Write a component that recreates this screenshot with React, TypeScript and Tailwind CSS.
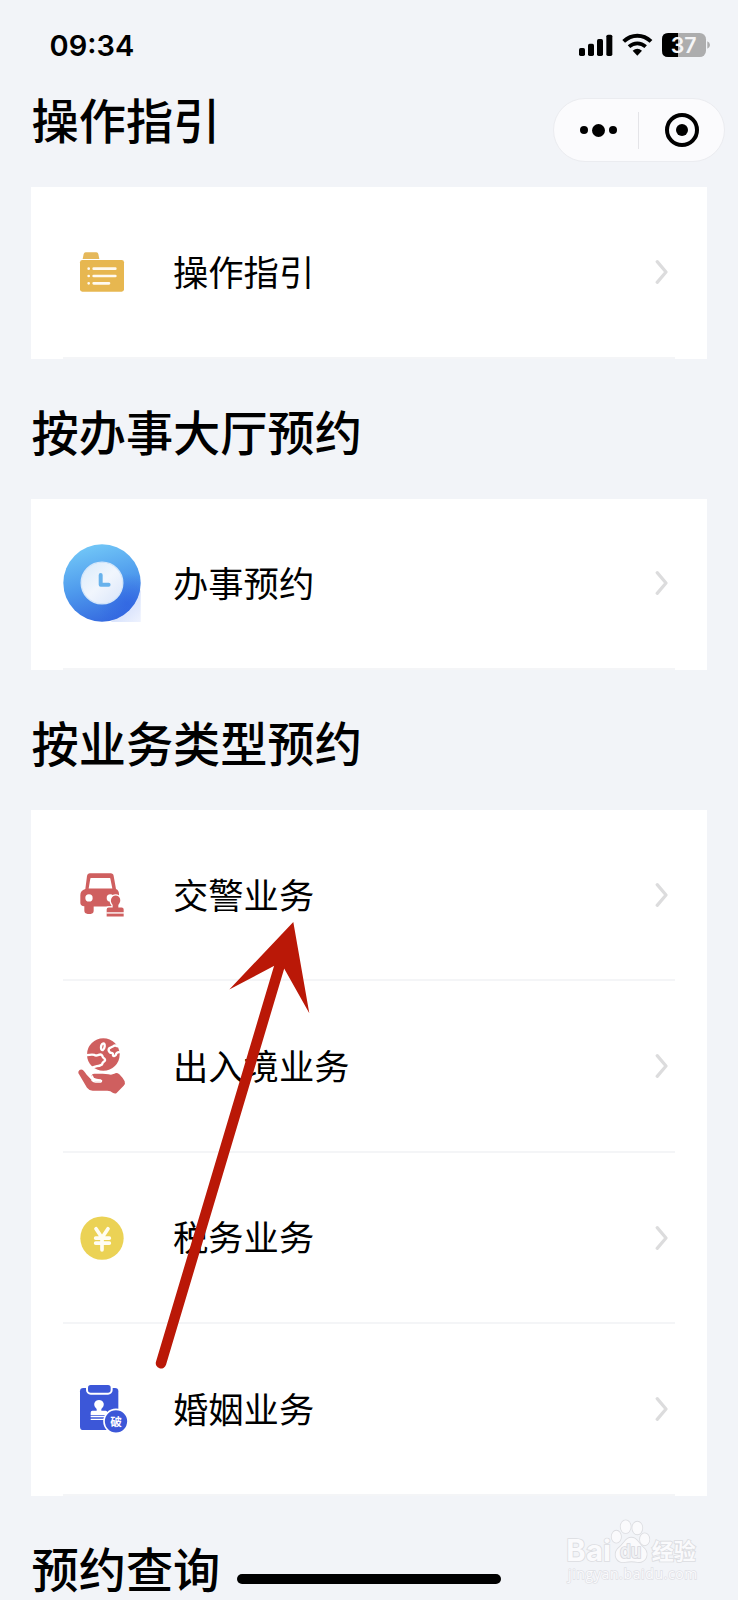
import React from 'react';

interface Item {
  label: string;
  icon: React.FC;
}

interface Section {
  title: string;
  items: Item[];
}

const FolderIcon: React.FC = () => (
  <svg className="w-[78px] h-[78px]" viewBox="129 158 234 234" fill="none">
    <path d="M188 236l3-15q1-5 6-5h32q5 0 6 5l3 15z" fill="#e5b85a" />
    <rect x="180" y="239" width="132" height="95" rx="7" fill="#e7b750" />
    <g stroke="#fffaf0" strokeWidth="8" strokeLinecap="round">
      <path d="M206 265h.1M206 287h.1M206 309h.1" />
      <path d="M221 265h65M221 287h65M221 309h46" />
    </g>
  </svg>
);

const ClockIcon: React.FC = () => (
  <svg className="w-[78px] h-[78px]" viewBox="129 461 234 236" fill="none">
    <defs>
      <linearGradient id="ring" x1="215" y1="461" x2="280" y2="697" gradientUnits="userSpaceOnUse">
        <stop offset="0" stopColor="#72c7f7" />
        <stop offset="0.5" stopColor="#4f9bed" />
        <stop offset="1" stopColor="#3468df" />
      </linearGradient>
      <linearGradient id="shade" x1="300" y1="630" x2="363" y2="697" gradientUnits="userSpaceOnUse">
        <stop offset="0" stopColor="#cddbfb" />
        <stop offset="1" stopColor="#eef2fe" />
      </linearGradient>
      <radialGradient id="deep" cx="322" cy="640" r="90" gradientUnits="userSpaceOnUse">
        <stop offset="0" stopColor="#2f62e2" stopOpacity="0.7" />
        <stop offset="1" stopColor="#2f62e2" stopOpacity="0" />
      </radialGradient>
      <linearGradient id="face" x1="190" y1="520" x2="300" y2="640" gradientUnits="userSpaceOnUse">
        <stop offset="0" stopColor="#d9ebfb" />
        <stop offset="0.5" stopColor="#f1f6fd" />
        <stop offset="1" stopColor="#dbe6fa" />
      </linearGradient>
    </defs>
    <path d="M363 600v97h-90z" fill="url(#shade)" />
    <circle cx="246" cy="579" r="117" fill="url(#ring)" />
    <circle cx="246" cy="579" r="117" fill="url(#deep)" />
    <circle cx="246" cy="579" r="63" fill="url(#face)" stroke="#d3e6fa" strokeWidth="4" />
    <path d="M242 555v29h24" stroke="#68b2ec" strokeWidth="12" strokeLinecap="round" strokeLinejoin="round" />
  </svg>
);

const CarIcon: React.FC = () => (
  <svg className="w-[78px] h-[78px]" viewBox="9 -13.8 234 234" fill="none">
    <path
      fillRule="evenodd"
      d="M89 38h63q8 0 9 8l7 39q9 4 9 16v37h-76v12q0 10-9 10H83q-10 0-10-10v-13q-12-1-12-10v-24q0-13 15-18l5-39q1-8 8-8zM93 52q-2 0-2 2l-5 30h71l-6-30q0-2-2-2z"
      fill="#cf5f5f"
    />
    <circle cx="87" cy="112" r="11" fill="#fff" />
    <circle cx="151" cy="112" r="11" fill="#fff" />
    <path
      d="M158 133q-8-9-4-19 4-9 13-9t13 9q3 10-5 19v8h10q6 0 6 6v21h-51v-21q0-6 6-6h12z"
      fill="#cf5f5f"
      stroke="#fff"
      strokeWidth="8"
      paintOrder="stroke"
    />
    <path d="M139 157h53" stroke="#fff" strokeWidth="4" />
  </svg>
);

const GlobeHandIcon: React.FC = () => (
  <svg className="w-[78px] h-[78px]" viewBox="9 5.4 234 234" fill="none">
    <circle cx="130" cy="88" r="49" fill="#cf5f5f" />
    <g stroke="#fff" strokeWidth="7" strokeLinecap="round" strokeLinejoin="round">
      <path d="M80 90q16-3 23-1 4 4 13 0 8-3 11 3 1 6 6 8 5 5-1 9-5 3-6 9-8 5-15 5-9 2-14 4" />
      <path d="M123 67q0-9 6-12 6-1 5 9-1 8-6 11-5 0-5-8z" />
      <path d="M172 63q-7-4-12 0l-8 4q-7 2-6 9 3 8 9 7 5 1 4 8 3 4 8-1 2-9 10-9" />
    </g>
    <path
      d="M55 140q4-9 12-6 4 2 13 15l17 18q4 3 12 3h13q5 0 5-3t-5-4l-15-3q-9-2-12-7-1-6 8-7h25q9 0 17 1 9 3 18-1 6-5 15 1 12 12 16 21 3 9-3 14l-22 22q-4 2-11-1-6-6-16-6H98q-10 0-17-9l-23-39q-4-5-3-9z"
      fill="#cf5f5f"
    />
    <path d="M97 152q1 9 11 12l14 1q5 3 0 6h-15q-6-1-11-5" stroke="#fff" strokeWidth="4" strokeLinecap="round" />
  </svg>
);

const YenIcon: React.FC = () => (
  <svg className="w-[78px] h-[78px]" viewBox="9 -5.4 234 234" fill="none">
    <circle cx="126" cy="112" r="65" fill="#ebd255" />
    <path d="M108 84l18 27 18-27M126 111v36M107 112h41M107 127h41" stroke="#fffdf2" strokeWidth="11" strokeLinecap="round" />
  </svg>
);

const MarriageIcon: React.FC = () => (
  <svg className="w-[78px] h-[78px]" viewBox="9 509 234 234" fill="none">
    <rect x="60" y="563" width="115" height="126" rx="10" fill="#3c57d8" />
    <rect x="84" y="554" width="68" height="23" rx="8" fill="#3c57d8" stroke="#fff" strokeWidth="12" paintOrder="stroke" />
    <path d="M110 626q-9-8-7-17 4-10 14-10t14 10q2 9-7 17v5h13q5 0 5 6v7H92v-7q0-6 5-6h13z" fill="#fff" />
    <path d="M92 648.5h50M92 657h50" stroke="#fff" strokeWidth="4" />
    <circle cx="168" cy="663" r="36" fill="#3c57d8" stroke="#fff" strokeWidth="5" />
    <text x="168" y="676" textAnchor="middle" fontSize="35" fontWeight="700" fill="#fff">破</text>
  </svg>
);

const ChevronIcon: React.FC = () => (
  <svg className="w-3.5 h-[26px]" viewBox="0 0 14 26" fill="none">
    <path d="M2.2 2.6L11 13 2.2 23.4" stroke="#dcdcdd" strokeWidth="3.2" strokeLinecap="round" strokeLinejoin="round" />
  </svg>
);

const sections: Section[] = [
  { title: '操作指引', items: [{ label: '操作指引', icon: FolderIcon }] },
  { title: '按办事大厅预约', items: [{ label: '办事预约', icon: ClockIcon }] },
  {
    title: '按业务类型预约',
    items: [
      { label: '交警业务', icon: CarIcon },
      { label: '出入境业务', icon: GlobeHandIcon },
      { label: '税务业务', icon: YenIcon },
      { label: '婚姻业务', icon: MarriageIcon },
    ],
  },
];

const StatusBar: React.FC = () => (
  <div className="flex h-[47.3px] justify-between pl-[49.5px] pr-[27px] pt-[27px]">
    <span className="pt-px font-[Inter] text-[29px] leading-9 font-semibold">09:34</span>
    <div className="flex items-start pt-1.5">
      <svg className="w-[34px] h-6" viewBox="237 99 102 72">
        <rect x="237" y="144" width="18" height="24" rx="5" />
        <rect x="264" y="131" width="18" height="37" rx="5" />
        <rect x="291" y="117" width="18" height="51" rx="5" />
        <rect x="319" y="104" width="18" height="64" rx="5" />
      </svg>
      <svg className="ml-[9px] w-[31px] h-6" viewBox="366 99 93 72" fill="none">
        <path d="M371 124q18-17 41-17t41 17" stroke="#000" strokeWidth="12" />
        <path d="M387 140q11-10 25-10t25 10" stroke="#000" strokeWidth="11" />
        <path d="M398 152q14-11 28 0l-14 15z" fill="#000" />
      </svg>
      <svg className="ml-[9px] w-[49px] h-6" viewBox="486 99 147 72">
        <rect x="486" y="99" width="132" height="72" rx="19" fill="#adadae" />
        <path d="M534 99h-29q-19 0-19 19v34q0 19 19 19h29z" fill="#000" />
        <path d="M622 124q8 3 8 11t-8 11z" fill="#adadae" />
        <text x="551" y="158" textAnchor="middle" fontSize="64" fontWeight="600" fill="#f5f5f7" className="font-[Inter]">37</text>
      </svg>
    </div>
  </div>
);

// Mini program menu floating over the page
const MenuCapsule: React.FC = () => (
  <div className="absolute top-[98px] left-[553px] flex h-16 w-[172px] items-center rounded-full border border-[#ebecf0] bg-[#fbfbfd]">
    <div className="flex w-[84px] items-center justify-center gap-1 pl-1">
      <span className="h-2 w-2 rounded-full bg-black" />
      <span className="h-[13px] w-[13px] rounded-full bg-black" />
      <span className="h-2 w-2 rounded-full bg-black" />
    </div>
    <div className="h-[37px] w-px bg-[#e4e4e8]" />
    <div className="flex flex-1 items-center justify-center">
      <span className="flex h-[34px] w-[34px] items-center justify-center rounded-full border-4 border-black">
        <span className="h-3 w-3 rounded-full bg-black" />
      </span>
    </div>
  </div>
);

const Heading: React.FC<{ title: string }> = ({ title }) => (
  <h2 className="flex h-[140px] items-center pt-[3px] pl-[0.5px] text-[47.2px] leading-none font-medium">{title}</h2>
);

const Row: React.FC<{ item: Item }> = ({ item }) => (
  <div className="mx-8 flex h-[171.4px] items-center border-b-2 border-[#f4f5f7]">
    <item.icon />
    <span className="ml-8 flex-1 pb-[3px] text-[35.3px] leading-none">{item.label}</span>
    <span className="mr-1.5">
      <ChevronIcon />
    </span>
  </div>
);

const Watermark: React.FC = () => (
  <svg className="absolute top-[1515px] left-[560px] h-[75px] w-[145px]" viewBox="180 105 435 225">
    <g fill="#fafafc" stroke="#dcdde1" strokeWidth="5" paintOrder="stroke">
      <ellipse cx="349" cy="170" rx="14" ry="18" />
      <ellipse cx="377" cy="140" rx="15" ry="19" />
      <ellipse cx="412" cy="144" rx="15" ry="19" />
      <ellipse cx="434" cy="178" rx="14" ry="18" />
      <path d="M394 173q12 0 21 13 9 12 20 22 9 12 2 27-8 13-24 11-19-4-38 0-18 3-26-12-6-15 4-27 11-9 20-21 9-13 21-13z" />
      <text x="199" y="244" fontSize="88" fontWeight="700" textLength="134" className="font-[Inter]">Bai</text>
      <text x="455" y="238" fontSize="66" fontWeight="700" textLength="132">经验</text>
      <text x="204" y="298" fontSize="42" textLength="388" strokeWidth="4" stroke="#dfe0e5" className="font-['Open_Sans']">jingyan.baidu.com</text>
      <text x="360" y="235" fontSize="56" fontWeight="600" textLength="64" lengthAdjust="spacingAndGlyphs" fill="#f0f1f4" stroke="#d6d7dc" className="font-[Inter]">du</text>
    </g>
  </svg>
);

const Arrow: React.FC = () => (
  <svg className="absolute top-[900px] left-[140px] h-[490px] w-[220px]" viewBox="140 900 220 490">
    <path d="M161 1363.3L281 961" stroke="#ba1807" strokeWidth="10.5" strokeLinecap="round" />
    <path d="M293.3 922L229.3 989.5 274.3 965.7 284.3 968.7 309.3 1013.3z" fill="#ba1807" />
  </svg>
);

export default function App() {
  return (
    <div className="relative h-[1600px] w-[738px] overflow-hidden bg-[#f2f4f8] font-['Noto_Sans_CJK_SC',sans-serif] text-black">
      <StatusBar />
      <main className="px-[31px]">
        {sections.map(section => (
          <section key={section.title}>
            <Heading title={section.title} />
            <div className="bg-white">
              {section.items.map(item => (
                <Row key={item.label} item={item} />
              ))}
            </div>
          </section>
        ))}
        <Heading title="预约查询" />
      </main>
      <MenuCapsule />
      <Arrow />
      <Watermark />
      <div className="absolute bottom-4 left-[237px] h-2.5 w-[264px] rounded-full bg-black" />
    </div>
  );
}
